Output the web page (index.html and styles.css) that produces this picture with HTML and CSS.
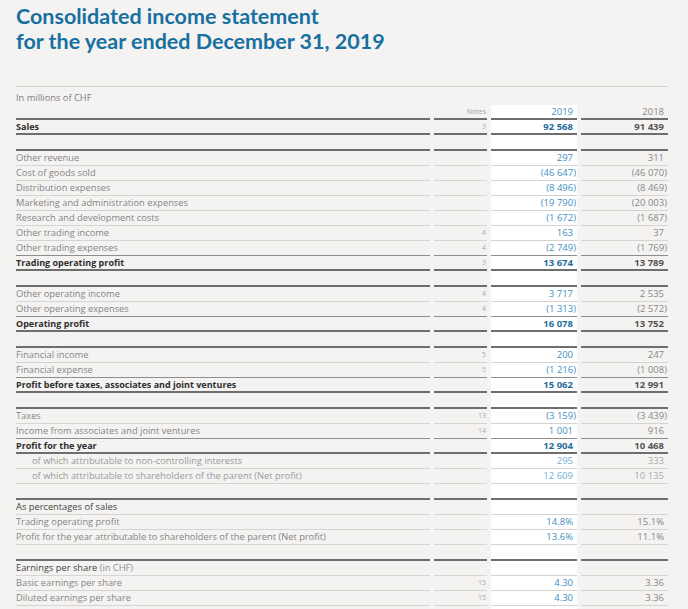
FILE: index.html
```html
<!DOCTYPE html>
<html lang="en">
<head>
<meta charset="utf-8">
<title>Consolidated income statement</title>
<link rel="stylesheet" href="styles.css">
</head>
<body>
<div class="page">
  <h1 class="title">Consolidated income statement<br>for the year ended December 31, 2019</h1>

  <div class="caption">In millions of CHF</div>

  <div class="grid">
    <div class="row hdr"><div class="l"></div><div class="n">Notes</div><div class="c">2019</div><div class="p">2018</div></div>
    <div class="row total"><div class="l">Sales</div><div class="n">3</div><div class="c">92 568</div><div class="p">91 439</div></div>
    <div class="row sp"><div class="l"></div><div class="n"></div><div class="c"></div><div class="p"></div></div>

    <div class="row"><div class="l">Other revenue</div><div class="n"></div><div class="c">297</div><div class="p">311</div></div>
    <div class="row"><div class="l">Cost of goods sold</div><div class="n"></div><div class="c"><span class="neg">(46 647)</span></div><div class="p"><span class="neg">(46 070)</span></div></div>
    <div class="row"><div class="l">Distribution expenses</div><div class="n"></div><div class="c"><span class="neg">(8 496)</span></div><div class="p"><span class="neg">(8 469)</span></div></div>
    <div class="row"><div class="l">Marketing and administration expenses</div><div class="n"></div><div class="c"><span class="neg">(19 790)</span></div><div class="p"><span class="neg">(20 003)</span></div></div>
    <div class="row"><div class="l">Research and development costs</div><div class="n"></div><div class="c"><span class="neg">(1 672)</span></div><div class="p"><span class="neg">(1 687)</span></div></div>
    <div class="row"><div class="l">Other trading income</div><div class="n">4</div><div class="c">163</div><div class="p">37</div></div>
    <div class="row pre"><div class="l">Other trading expenses</div><div class="n">4</div><div class="c"><span class="neg">(2 749)</span></div><div class="p"><span class="neg">(1 769)</span></div></div>
    <div class="row total"><div class="l">Trading operating profit</div><div class="n">3</div><div class="c">13 674</div><div class="p">13 789</div></div>
    <div class="row sp"><div class="l"></div><div class="n"></div><div class="c"></div><div class="p"></div></div>

    <div class="row"><div class="l">Other operating income</div><div class="n">4</div><div class="c">3 717</div><div class="p">2 535</div></div>
    <div class="row pre"><div class="l">Other operating expenses</div><div class="n">4</div><div class="c"><span class="neg">(1 313)</span></div><div class="p"><span class="neg">(2 572)</span></div></div>
    <div class="row total"><div class="l">Operating profit</div><div class="n"></div><div class="c">16 078</div><div class="p">13 752</div></div>
    <div class="row sp"><div class="l"></div><div class="n"></div><div class="c"></div><div class="p"></div></div>

    <div class="row"><div class="l">Financial income</div><div class="n">5</div><div class="c">200</div><div class="p">247</div></div>
    <div class="row pre"><div class="l">Financial expense</div><div class="n">5</div><div class="c"><span class="neg">(1 216)</span></div><div class="p"><span class="neg">(1 008)</span></div></div>
    <div class="row total"><div class="l">Profit before taxes, associates and joint ventures</div><div class="n"></div><div class="c">15 062</div><div class="p">12 991</div></div>
    <div class="row sp"><div class="l"></div><div class="n"></div><div class="c"></div><div class="p"></div></div>

    <div class="row"><div class="l">Taxes</div><div class="n">13</div><div class="c"><span class="neg">(3 159)</span></div><div class="p"><span class="neg">(3 439)</span></div></div>
    <div class="row pre"><div class="l">Income from associates and joint ventures</div><div class="n">14</div><div class="c">1 001</div><div class="p">916</div></div>
    <div class="row total"><div class="l">Profit for the year</div><div class="n"></div><div class="c">12 904</div><div class="p">10 468</div></div>
    <div class="row ind"><div class="l">of which attributable to non-controlling interests</div><div class="n"></div><div class="c">295</div><div class="p">333</div></div>
    <div class="row ind"><div class="l">of which attributable to shareholders of the parent (Net profit)</div><div class="n"></div><div class="c">12 609</div><div class="p">10 135</div></div>
    <div class="row sp"><div class="l"></div><div class="n"></div><div class="c"></div><div class="p"></div></div>

    <div class="row sub"><div class="l">As percentages of sales</div><div class="n"></div><div class="c"></div><div class="p"></div></div>
    <div class="row"><div class="l">Trading operating profit</div><div class="n"></div><div class="c">14.8%</div><div class="p">15.1%</div></div>
    <div class="row"><div class="l">Profit for the year attributable to shareholders of the parent (Net profit)</div><div class="n"></div><div class="c">13.6%</div><div class="p">11.1%</div></div>
    <div class="row sp"><div class="l"></div><div class="n"></div><div class="c"></div><div class="p"></div></div>

    <div class="row sub"><div class="l">Earnings per share <span class="unit">(in CHF)</span></div><div class="n"></div><div class="c"></div><div class="p"></div></div>
    <div class="row"><div class="l">Basic earnings per share</div><div class="n">15</div><div class="c">4.30</div><div class="p">3.36</div></div>
    <div class="row"><div class="l">Diluted earnings per share</div><div class="n">15</div><div class="c">4.30</div><div class="p">3.36</div></div>
    <div class="row end"><div class="l"></div><div class="n"></div><div class="c"></div><div class="p"></div></div>
  </div>
</div>
</body>
</html>
```

FILE: styles.css
```css
* { box-sizing: border-box; }

html, body {
  margin: 0;
  padding: 0;
  background: #f4f3f2;
}

body {
  font-family: "Open Sans", Lato, sans-serif;
  color: #858585;
  overflow: hidden;
}

.page {
  padding: 4px 20px 0 16px;
}

.title {
  margin: 0;
  font-family: Lato, sans-serif;
  font-weight: 700;
  font-size: 21.5px;
  line-height: 25px;
  color: #17709f;
}

.caption {
  margin-top: 32px;
  border-top: 1px solid #d6d4d1;
  height: 19px;
  padding-top: 5px;
  font-size: 9.3px;
  line-height: 11px;
  color: #7c7c7c;
}

.grid {
  display: grid;
  grid-template-columns: 414px 53px 86px 87px;
  column-gap: 4px;
}

.row { display: contents; }

.row > div {
  height: 15px;
  line-height: 14px;
  font-size: 9.5px;
  border-bottom: 1px solid #d6d4d1;
  white-space: nowrap;
}

.row > .l {
  font-size: 9.3px;
  color: #858585;
}

.row > .n {
  text-align: right;
  padding-right: 1px;
  font-size: 7px;
  color: #aaaaaa;
}

.row > .c {
  background: #ffffff;
  text-align: right;
  padding-right: 4px;
  color: #3f8fc3;
}

.row > .p {
  text-align: right;
  padding-right: 4px;
  color: #888888;
}

.neg { margin-right: -3px; }

.hdr > div,
.total > div,
.sp > div {
  line-height: 13px;
  border-bottom: 2px solid #6e6e6e;
}

.sp > div { height: 16px; }

.hdr > .n { color: #a0a0a0; }

.pre > div { border-bottom-color: #8e8e8e; }

.total > .l { font-size: 9px; color: #2e2e2e; font-weight: 700; }
.total > .c { color: #1f6c9d; font-weight: 700; }
.total > .p { color: #555555; font-weight: 700; }

.ind > .l { padding-left: 16px; color: #9a9a9a; }
.ind > .c { color: #72add6; }
.ind > .p { color: #aaaaaa; }

.sub > .l { color: #444444; }
.unit { color: #8f8f8f; }

.end > div { border-bottom: none; height: 20px; }
```
